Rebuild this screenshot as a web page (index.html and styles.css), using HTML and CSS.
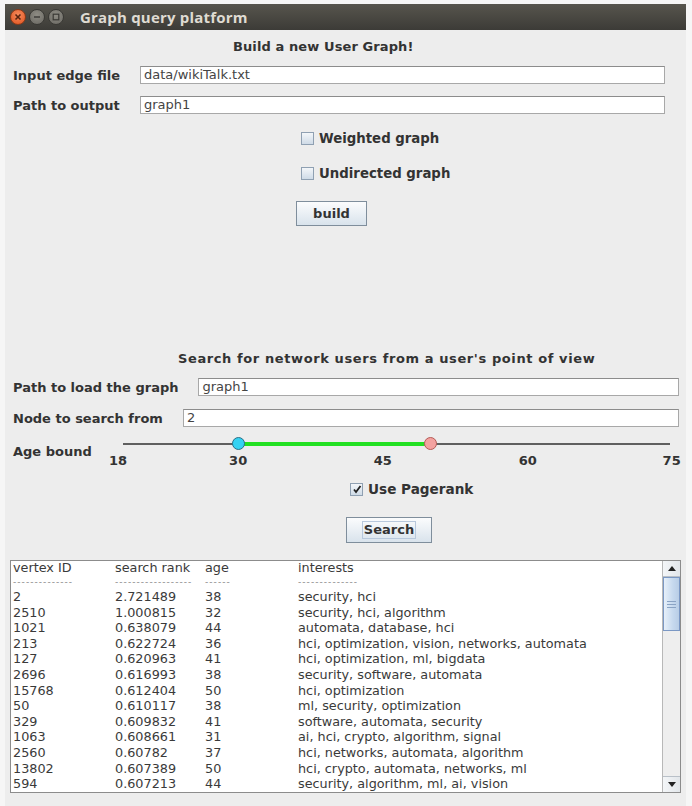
FILE: index.html
```html
<!DOCTYPE html>
<html>
<head>
<meta charset="utf-8">
<link rel="stylesheet" href="styles.css">
</head>
<body>
<div class="window">
  <div class="titlebar">
    <span class="tb-btn close"><svg width="8" height="8" viewBox="0 0 8 8"><path d="M1.5 1.5 L6.5 6.5 M6.5 1.5 L1.5 6.5" stroke="#5a2410" stroke-width="1.6"/></svg></span>
    <span class="tb-btn mini"><svg width="8" height="8" viewBox="0 0 8 8"><path d="M1 4 H7" stroke="#3a3935" stroke-width="1.4"/></svg></span>
    <span class="tb-btn maxi"><svg width="8" height="8" viewBox="0 0 8 8"><rect x="1.2" y="1.2" width="5.6" height="5.6" fill="none" stroke="#3a3935" stroke-width="1.2"/></svg></span>
    <span class="title">Graph query platform</span>
  </div>
  <div class="content">
    <div class="heading h1">Build a new User Graph!</div>
    <div class="row r1"><span class="lbl fixed">Input edge file</span><span class="input in1">data/wikiTalk.txt</span></div>
    <div class="row r2"><span class="lbl fixed">Path to output</span><span class="input in1">graph1</span></div>
    <div class="cbrow cb1"><span class="cbox"></span><span class="cblbl">Weighted graph</span></div>
    <div class="cbrow cb2"><span class="cbox"></span><span class="cblbl">Undirected graph</span></div>
    <div class="btnrow b1"><span class="btn build">build</span></div>

    <div class="heading h2">Search for network users from a user's point of view</div>
    <div class="row r3"><span class="lbl">Path to load the graph</span><span class="input in2">graph1</span></div>
    <div class="row r4"><span class="lbl">Node to search from</span><span class="input in2">2</span></div>
    <div class="sliderrow">
      <span class="lbl agelbl">Age bound</span>
      <div class="slider">
        <div class="track"></div>
        <div class="range" style="left:21.05%;width:35.09%"></div>
        <span class="thumb t1" style="left:21.05%"></span>
        <span class="thumb t2" style="left:56.14%"></span>
        <span class="tick" style="left:-0.9%">18</span>
        <span class="tick" style="left:21.05%">30</span>
        <span class="tick" style="left:47.5%">45</span>
        <span class="tick" style="left:74%">60</span>
        <span class="tick" style="left:100.3%">75</span>
      </div>
    </div>
    <div class="cbrow cb3"><span class="cbox checked"><svg width="10" height="10" viewBox="0 0 10 10"><path d="M2 5.5 L4 8 L8.5 2" fill="none" stroke="#222" stroke-width="1.8"/></svg></span><span class="cblbl">Use Pagerank</span></div>
    <div class="btnrow b2"><span class="btn search"><span class="focus">Search</span></span></div>

    <div class="tablebox">
      <div class="tabletext">
        <div class="trow hdr"><span>vertex ID</span><span>search rank</span><span>age</span><span>interests</span></div>
        <div class="trow dash"><span>--------------</span><span>------------------</span><span>------</span><span>--------------</span></div>
        <div class="trow"><span>2</span><span>2.721489</span><span>38</span><span>security, hci</span></div>
        <div class="trow"><span>2510</span><span>1.000815</span><span>32</span><span>security, hci, algorithm</span></div>
        <div class="trow"><span>1021</span><span>0.638079</span><span>44</span><span>automata, database, hci</span></div>
        <div class="trow"><span>213</span><span>0.622724</span><span>36</span><span>hci, optimization, vision, networks, automata</span></div>
        <div class="trow"><span>127</span><span>0.620963</span><span>41</span><span>hci, optimization, ml, bigdata</span></div>
        <div class="trow"><span>2696</span><span>0.616993</span><span>38</span><span>security, software, automata</span></div>
        <div class="trow"><span>15768</span><span>0.612404</span><span>50</span><span>hci, optimization</span></div>
        <div class="trow"><span>50</span><span>0.610117</span><span>38</span><span>ml, security, optimization</span></div>
        <div class="trow"><span>329</span><span>0.609832</span><span>41</span><span>software, automata, security</span></div>
        <div class="trow"><span>1063</span><span>0.608661</span><span>31</span><span>ai, hci, crypto, algorithm, signal</span></div>
        <div class="trow"><span>2560</span><span>0.60782</span><span>37</span><span>hci, networks, automata, algorithm</span></div>
        <div class="trow"><span>13802</span><span>0.607389</span><span>50</span><span>hci, crypto, automata, networks, ml</span></div>
        <div class="trow"><span>594</span><span>0.607213</span><span>44</span><span>security, algorithm, ml, ai, vision</span></div>
      </div>
      <div class="scrollbar">
        <span class="sbtn up"><svg width="8" height="5" viewBox="0 0 8 5"><path d="M0 5 L4 0 L8 5 Z" fill="#222"/></svg></span>
        <div class="strack">
          <div class="sthumb"><span class="grip"></span></div>
        </div>
        <span class="sbtn down"><svg width="8" height="5" viewBox="0 0 8 5"><path d="M0 0 L4 5 L8 0 Z" fill="#222"/></svg></span>
      </div>
    </div>
  </div>
</div>
</body>
</html>
```

FILE: styles.css
```css
html, body {
  margin: 0;
  padding: 0;
  background: #f6f6f6;
}
body {
  width: 692px;
  height: 806px;
  overflow: hidden;
  font-family: "DejaVu Sans", sans-serif;
  color: #333;
}
.window {
  margin-left: 5px;
  margin-top: 4px;
  width: 681px;
  height: 802px;
  background: #ededed;
  display: flex;
  flex-direction: column;
}
.titlebar {
  height: 26px;
  flex: none;
  background: linear-gradient(#57554d, #3c3b37);
  display: flex;
  align-items: center;
  padding-left: 5px;
}
.tb-btn {
  width: 16px;
  height: 16px;
  border-radius: 50%;
  display: flex;
  align-items: center;
  justify-content: center;
  margin-right: 3px;
  box-sizing: border-box;
}
.tb-btn.close {
  background: radial-gradient(circle at 50% 35%, #f58a5c, #e0531f);
  border: 1px solid #8c3a18;
}
.tb-btn.mini, .tb-btn.maxi {
  background: radial-gradient(circle at 50% 35%, #8e8c84, #6a6862);
  border: 1px solid #3a3935;
}
.tb-btn.maxi { margin-right: 0; }
.title {
  margin-left: 16px;
  font-family: "Open Sans", "DejaVu Sans", sans-serif;
  font-weight: bold;
  font-size: 15px;
  color: #dfdbd2;
  letter-spacing: 0.2px;
}
.content {
  flex: 1;
  display: flex;
  flex-direction: column;
  padding-left: 8px;
}
.heading {
  font-weight: bold;
  font-size: 13px;
  line-height: 16px;
  height: 16px;
  color: #333;
  white-space: nowrap;
}
.h1 { margin-top: 9px; padding-left: 220px; letter-spacing: 0.1px; }
.h2 { margin-top: 125px; padding-left: 165px; letter-spacing: 0.6px; }
.row {
  display: flex;
  align-items: center;
  height: 18px;
}
.r1 { margin-top: 11px; padding-right: 21px; }
.r2 { margin-top: 12px; padding-right: 21px; }
.r3 { margin-top: 11px; padding-right: 7px; }
.r4 { margin-top: 13px; padding-right: 7px; }
.lbl {
  font-weight: bold;
  font-size: 13px;
  color: #333;
  white-space: nowrap;
}
.lbl.fixed { width: 127px; flex: none; }
.r3 .lbl, .r4 .lbl { margin-right: 20px; }
.input {
  flex: 1;
  height: 18px;
  box-sizing: border-box;
  background: #fff;
  border: 1px solid #a8a8a8;
  border-top-color: #8c8c8c;
  font-size: 13px;
  line-height: 16px;
  padding-left: 3px;
  color: #444;
}
.cbrow {
  display: flex;
  align-items: center;
  height: 16px;
}
.cb1 { margin-top: 16px; padding-left: 288px; }
.cb2 { margin-top: 19px; padding-left: 288px; }
.cb3 { margin-top: 11px; padding-left: 337px; }
.cbox {
  width: 13px;
  height: 13px;
  box-sizing: border-box;
  border: 1px solid #8fa0b2;
  background: linear-gradient(#f3f6f9, #cfdbe7);
  display: flex;
  align-items: center;
  justify-content: center;
  flex: none;
}
.cblbl {
  margin-left: 5px;
  font-weight: bold;
  font-size: 13.3px;
  color: #333;
}
.cb3 .cblbl { font-size: 13.6px; }
.btnrow {
  display: flex;
}
.b1 { margin-top: 20px; padding-left: 283px; }
.b2 { margin-top: 20px; padding-left: 333px; }
.btn {
  display: flex;
  align-items: center;
  justify-content: center;
  box-sizing: border-box;
  border: 1px solid #7f8e9c;
  background: linear-gradient(#fbfcfd, #d9e3ec);
  font-weight: bold;
  font-size: 13px;
  color: #333;
}
.build { width: 71px; height: 25px; }
.search { width: 86px; height: 26px; font-size: 13px; }
.focus {
  border: 1px solid #b8c8dc;
  padding: 0 1px;
  line-height: 16px;
}
.sliderrow {
  margin-top: 5px;
  height: 38px;
  display: flex;
  position: relative;
}
.agelbl {
  margin-top: 13px;
  line-height: 14px;
  width: 110px;
  flex: none;
}
.slider {
  position: relative;
  width: 547px;
  height: 38px;
  margin-left: 0;
}
.track {
  position: absolute;
  left: 0;
  right: 0;
  top: 11px;
  height: 2px;
  background: #5f5f5f;
}
.range {
  position: absolute;
  top: 10px;
  height: 4px;
  background: #22e022;
}
.thumb {
  position: absolute;
  top: 5px;
  width: 13px;
  height: 13px;
  margin-left: -6px;
  box-sizing: border-box;
  border-radius: 50%;
}
.t1 { background: #35d2f2; border: 1px solid #2a6f86; }
.t2 { background: #f3a2a0; border: 1px solid #b55a55; }
.tick {
  position: absolute;
  top: 22px;
  line-height: 14px;
  transform: translateX(-50%);
  font-weight: bold;
  font-size: 13px;
  color: #333;
}
.tablebox {
  margin-top: 17px;
  width: 671px;
  height: 233px;
  margin-left: -3px;
  box-sizing: border-box;
  border: 1px solid #8c8c8c;
  background: #fff;
  display: flex;
}
.tabletext {
  flex: 1;
  padding-left: 2px;
  padding-top: 0;
  overflow: hidden;
}
.trow {
  display: grid;
  grid-template-columns: 102px 90px 93px 1fr;
  height: 15.6px;
  line-height: 15.6px;
  font-size: 12.8px;
  color: #3a3a3a;
  white-space: nowrap;
}
.trow.hdr { height: 14px; line-height: 14px; }
.trow.dash {
  color: #888;
  height: 14px;
  line-height: 14px;
  font-size: 9px;
  letter-spacing: 1.05px;
}
.scrollbar {
  width: 17px;
  flex: none;
  display: flex;
  flex-direction: column;
  background: #eeeeee;
  border-left: 1px solid #b8b8b8;
}
.sbtn {
  height: 16px;
  flex: none;
  display: flex;
  align-items: center;
  justify-content: center;
  background: linear-gradient(90deg, #f4f6f8, #e2e6ea);
  box-sizing: border-box;
  border-bottom: 1px solid #b9c0c8;
}
.sbtn.down { border-bottom: none; border-top: 1px solid #b9c0c8; }
.strack {
  flex: 1;
  background: #eeeeee;
}
.sthumb {
  height: 54px;
  box-sizing: border-box;
  border: 1px solid #7b98c4;
  background: linear-gradient(90deg, #e7f0fa, #c6d9ee 60%, #b8cde6);
  display: flex;
  align-items: center;
  justify-content: center;
}
.grip {
  width: 9px;
  height: 5px;
  border-top: 1px solid #8aa3c4;
  border-bottom: 1px solid #8aa3c4;
  position: relative;
}
.grip::after {
  content: "";
  position: absolute;
  left: 0;
  right: 0;
  top: 2px;
  height: 1px;
  background: #8aa3c4;
}
```
